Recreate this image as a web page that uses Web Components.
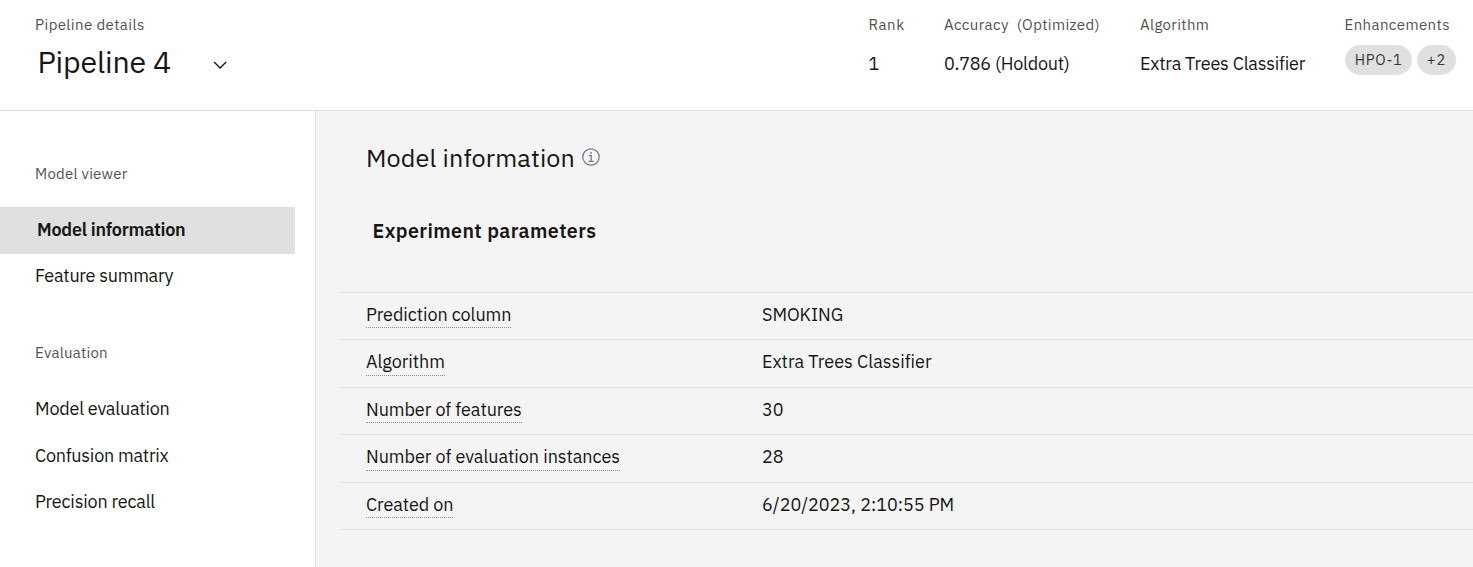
<!DOCTYPE html>
<html lang="en">
<head>
<meta charset="utf-8">
<title>Pipeline details</title>
<style>
  html, body { margin: 0; height: 100%; overflow: hidden; background: #fff; }
  body { font-family: "IBM Plex Sans", Roboto, "Noto Sans", sans-serif; color: #161616; }
</style>
</head>
<body>
<pipeline-page></pipeline-page>
<script>
const define = (name, html, ready) => customElements.define(name, class extends HTMLElement {
  connectedCallback() {
    if (this.shadowRoot) return;
    const t = document.createElement('template');
    t.innerHTML = html;
    this.attachShadow({ mode: 'open' }).append(t.content.cloneNode(true));
    if (ready) ready(this);
  }
});

// One line of text whose tracking is set so that it spans the width in "measure".
define('ui-text', `<style>
  :host { display: block; white-space: pre; font-size: 18px; line-height: 24px; width: max-content; }
  :host([kind=label]) { font-size: 15px; color: #525252; }
  :host([kind=title]) { font-size: 30.4px; line-height: 40px; }
  :host([kind=heading]) { font-size: 25.2px; line-height: 34px; }
  :host([kind=subheading]) { font-size: 19.6px; line-height: 26px; font-weight: 600; }
  :host([kind=strong]) { font-weight: 600; font-size: 18px; }
  :host([kind=tag]) { font-size: 14.6px; color: #393939; }
</style><slot></slot>`, el => {
  const want = parseFloat(el.getAttribute('measure'));
  const n = el.textContent.length;
  if (want) {
    el.style.letterSpacing = (want - el.getBoundingClientRect().width) / n + 'px';
  }
});

define('ui-tag', `<style>
  :host { display: flex; align-items: center; box-sizing: border-box; height: 30px; border-radius: 15px; padding-left: 9.6px; background: #e0e0e0; }
</style><slot></slot>`);

define('chevron-icon', `<style>:host { display: block; width: 20px; height: 20px; } svg { display: block; }</style>
<svg width="20" height="20" viewBox="0 0 20 20" fill="none" stroke="#161616" stroke-width="1.3"><path d="M4.1 7l6 6 6-6"/></svg>`);

define('info-icon', `<style>:host { display: block; width: 18px; height: 18px; } svg { display: block; }</style>
<svg width="18" height="18" viewBox="0 0 18 18" fill="none" stroke="#6f7c8b" stroke-width="1.25"><circle cx="9" cy="9" r="8.2"/><path d="M7 7.7h2.2v5.4M6.4 13.4h5.3"/><circle cx="9" cy="4.9" r=".9" fill="#6f7c8b" stroke="none"/></svg>`);

define('header-stat', `<style>
  :host { display: block; padding-top: 13px; }
  .value { padding-top: 15px; }
</style><slot name="label"></slot><div class="value"><slot></slot></div>`);

define('page-header', `<style>
  :host { display: grid; grid-template-columns: 868.4px 75.6px 196px 204.5px 1fr; height: 110px; border-bottom: 1px solid #e0e0e0; }
  .main { padding: 13px 0 0 35px; }
  .pick { display: flex; align-items: center; gap: 39px; padding: 5px 0 0 2.4px; }
  chevron-icon { margin-top: 6px; }
  .tags { display: flex; gap: 5px; margin: -7px 0 0 .6px; }
  .a { width: 67px; } .b { width: 39px; }
</style>
<div class="main"><ui-text kind="label" measure="109.6">Pipeline details</ui-text>
  <div class="pick"><ui-text kind="title" measure="133.6">Pipeline 4</ui-text><chevron-icon></chevron-icon></div></div>
<header-stat><ui-text slot="label" kind="label" measure="36.3">Rank</ui-text><ui-text>1</ui-text></header-stat>
<header-stat><ui-text slot="label" kind="label" measure="156">Accuracy  (Optimized)</ui-text><ui-text measure="125.6">0.786 (Holdout)</ui-text></header-stat>
<header-stat><ui-text slot="label" kind="label" measure="69.3">Algorithm</ui-text><ui-text measure="165">Extra Trees Classifier</ui-text></header-stat>
<header-stat><ui-text slot="label" kind="label" measure="105.4">Enhancements</ui-text>
  <div class="tags"><ui-tag class="a"><ui-text kind="tag" measure="47.8">HPO-1</ui-text></ui-tag><ui-tag class="b"><ui-text kind="tag" measure="19.5">+2</ui-text></ui-tag></div></header-stat>`);

define('nav-item', `<style>
  :host { display: flex; align-items: center; box-sizing: border-box; width: 295px; height: 46.5px; padding-left: 35px; }
  :host([selected]) { background: #e0e0e0; height: 47px; padding: 0 0 1px 37px; margin-bottom: -1px; }
</style><slot></slot>`);

define('nav-group', `<style>
  :host { display: block; }
  .head { padding-left: 35px; height: 45px; }
</style><div class="head"><slot name="label"></slot></div><slot></slot>`);

define('side-nav', `<style>
  :host { display: flex; flex-direction: column; gap: 41.5px; box-sizing: border-box; width: 316px; padding-top: 51px; border-right: 1px solid #e0e0e0; background: #fff; }
</style>
<nav-group><ui-text slot="label" kind="label" measure="92.4">Model viewer</ui-text>
  <nav-item selected><ui-text kind="strong" measure="148.4">Model information</ui-text></nav-item>
  <nav-item><ui-text measure="138.2">Feature summary</ui-text></nav-item></nav-group>
<nav-group><ui-text slot="label" kind="label" measure="72.8">Evaluation</ui-text>
  <nav-item><ui-text measure="134.6">Model evaluation</ui-text></nav-item>
  <nav-item><ui-text measure="133.4">Confusion matrix</ui-text></nav-item>
  <nav-item><ui-text measure="120">Precision recall</ui-text></nav-item></nav-group>`);

define('param-row', `<style>
  :host { display: grid; grid-template-columns: 396px 1fr; box-sizing: border-box; height: 47.45px; padding: 10px 0 0 25px; border-bottom: 1px solid #e0e0e0; }
  .term { width: max-content; height: 24.3px; border-bottom: 1px dotted #8d8d8d; }
</style><div><div class="term"><slot name="term"></slot></div></div><slot></slot>`);

define('param-table', `<style>
  :host { display: block; margin: 48px 0 0 25px; border-top: 1px solid #e0e0e0; }
</style><slot></slot>`);

define('info-panel', `<style>
  :host { display: block; flex: 1; min-width: 0; background: #f4f4f4; }
  .title { display: flex; align-items: center; gap: 7px; padding: 30px 0 0 50px; }
  info-icon { margin-top: -2px; }
  .sub { padding: 43px 0 0 56.5px; }
</style>
<div class="title"><ui-text kind="heading" measure="209">Model information</ui-text><info-icon></info-icon></div>
<div class="sub"><ui-text kind="subheading" measure="224">Experiment parameters</ui-text></div>
<param-table>
  <param-row><ui-text slot="term" measure="145.4">Prediction column</ui-text><ui-text measure="81.2">SMOKING</ui-text></param-row>
  <param-row><ui-text slot="term" measure="79">Algorithm</ui-text><ui-text measure="169.4">Extra Trees Classifier</ui-text></param-row>
  <param-row><ui-text slot="term" measure="155.8">Number of features</ui-text><ui-text measure="21.6">30</ui-text></param-row>
  <param-row><ui-text slot="term" measure="254">Number of evaluation instances</ui-text><ui-text measure="21.6">28</ui-text></param-row>
  <param-row><ui-text slot="term" measure="87.4">Created on</ui-text><ui-text measure="192.2">6/20/2023, 2:10:55 PM</ui-text></param-row>
</param-table>`);

define('pipeline-page', `<style>
  :host { display: flex; flex-direction: column; height: 100vh; }
  .body { display: flex; flex: 1; min-height: 0; }
</style><page-header></page-header><div class="body"><side-nav></side-nav><info-panel></info-panel></div>`);
</script>
</body>
</html>
